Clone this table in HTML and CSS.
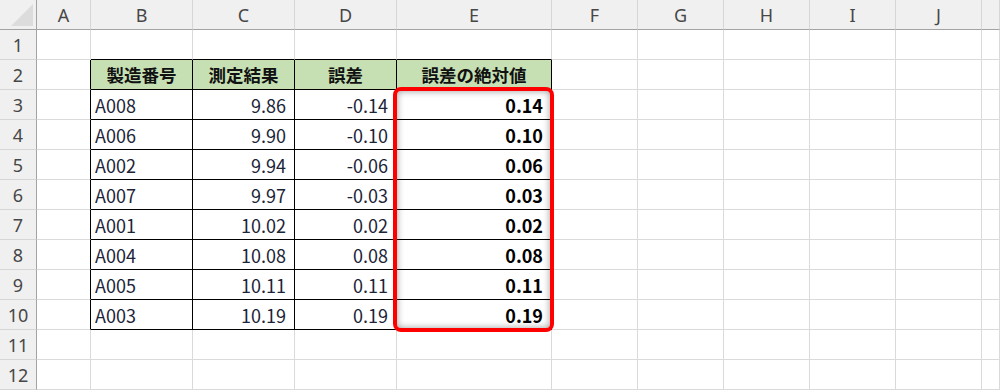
FILE: index.html
```html
<!DOCTYPE html>
<html lang="ja">
<head>
<meta charset="utf-8">
<title>誤差の絶対値</title>
<link rel="stylesheet" href="styles.css">
</head>
<body>
<div class="sheet">
  <!-- column headers -->
  <div class="c corner"></div>
  <div class="c ch">A</div><div class="c ch">B</div><div class="c ch">C</div><div class="c ch">D</div><div class="c ch">E</div><div class="c ch">F</div><div class="c ch">G</div><div class="c ch">H</div><div class="c ch">I</div><div class="c ch">J</div><div class="c ch"></div>

  <!-- row 1 -->
  <div class="c rh">1</div>
  <div class="c"></div><div class="c tt"></div><div class="c tt"></div><div class="c tt"></div><div class="c tt"></div><div class="c"></div><div class="c"></div><div class="c"></div><div class="c"></div><div class="c"></div><div class="c"></div>

  <!-- row 2 -->
  <div class="c rh">2</div>
  <div class="c tl"></div><div class="c tb hd">製造番号</div><div class="c tb hd">測定結果</div><div class="c tb hd">誤差</div><div class="c tb hd">誤差の絶対値</div><div class="c"></div><div class="c"></div><div class="c"></div><div class="c"></div><div class="c"></div><div class="c"></div>

  <!-- row 3 -->
  <div class="c rh">3</div>
  <div class="c tl"></div><div class="c tb txt">A008</div><div class="c tb num">9.86</div><div class="c tb num">-0.14</div><div class="c tb num b">0.14</div><div class="c"></div><div class="c"></div><div class="c"></div><div class="c"></div><div class="c"></div><div class="c"></div>

  <!-- row 4 -->
  <div class="c rh">4</div>
  <div class="c tl"></div><div class="c tb txt">A006</div><div class="c tb num">9.90</div><div class="c tb num">-0.10</div><div class="c tb num b">0.10</div><div class="c"></div><div class="c"></div><div class="c"></div><div class="c"></div><div class="c"></div><div class="c"></div>

  <!-- row 5 -->
  <div class="c rh">5</div>
  <div class="c tl"></div><div class="c tb txt">A002</div><div class="c tb num">9.94</div><div class="c tb num">-0.06</div><div class="c tb num b">0.06</div><div class="c"></div><div class="c"></div><div class="c"></div><div class="c"></div><div class="c"></div><div class="c"></div>

  <!-- row 6 -->
  <div class="c rh">6</div>
  <div class="c tl"></div><div class="c tb txt">A007</div><div class="c tb num">9.97</div><div class="c tb num">-0.03</div><div class="c tb num b">0.03</div><div class="c"></div><div class="c"></div><div class="c"></div><div class="c"></div><div class="c"></div><div class="c"></div>

  <!-- row 7 -->
  <div class="c rh">7</div>
  <div class="c tl"></div><div class="c tb txt">A001</div><div class="c tb num">10.02</div><div class="c tb num">0.02</div><div class="c tb num b">0.02</div><div class="c"></div><div class="c"></div><div class="c"></div><div class="c"></div><div class="c"></div><div class="c"></div>

  <!-- row 8 -->
  <div class="c rh">8</div>
  <div class="c tl"></div><div class="c tb txt">A004</div><div class="c tb num">10.08</div><div class="c tb num">0.08</div><div class="c tb num b">0.08</div><div class="c"></div><div class="c"></div><div class="c"></div><div class="c"></div><div class="c"></div><div class="c"></div>

  <!-- row 9 -->
  <div class="c rh">9</div>
  <div class="c tl"></div><div class="c tb txt">A005</div><div class="c tb num">10.11</div><div class="c tb num">0.11</div><div class="c tb num b">0.11</div><div class="c"></div><div class="c"></div><div class="c"></div><div class="c"></div><div class="c"></div><div class="c"></div>

  <!-- row 10 -->
  <div class="c rh">10</div>
  <div class="c tl"></div><div class="c tb txt">A003</div><div class="c tb num">10.19</div><div class="c tb num">0.19</div><div class="c tb num b">0.19</div><div class="c"></div><div class="c"></div><div class="c"></div><div class="c"></div><div class="c"></div><div class="c"></div>

  <!-- row 11 -->
  <div class="c rh">11</div>
  <div class="c"></div><div class="c"></div><div class="c"></div><div class="c"></div><div class="c"></div><div class="c"></div><div class="c"></div><div class="c"></div><div class="c"></div><div class="c"></div><div class="c"></div>

  <!-- row 12 -->
  <div class="c rh">12</div>
  <div class="c"></div><div class="c"></div><div class="c"></div><div class="c"></div><div class="c"></div><div class="c"></div><div class="c"></div><div class="c"></div><div class="c"></div><div class="c"></div><div class="c"></div>

  <div class="highlight"></div>
</div>
</body>
</html>
```

FILE: styles.css
```css
html, body {
  margin: 0;
  padding: 0;
  background: #ffffff;
}

.sheet {
  position: relative;
  display: grid;
  grid-template-columns: 37px 54px 102px 102px 102px 155px 86px 86px 86px 86px 86px 18px;
  grid-template-rows: repeat(13, 30px);
  width: 1000px;
  height: 390px;
  overflow: hidden;
  font-family: "Noto Sans CJK JP", "Noto Sans", sans-serif;
  font-size: 17.5px;
  color: #1c2438;
}

.c {
  box-sizing: border-box;
  display: flex;
  align-items: center;
  border-right: 1px solid #dadada;
  border-bottom: 1px solid #dadada;
  white-space: nowrap;
  overflow: hidden;
}

.ch {
  justify-content: center;
  background: #f0f0f0;
  border-bottom-color: #a3a3a3;
  border-right-color: #d6d6d6;
  color: #474747;
  font-family: "Noto Sans", "Noto Sans CJK JP", sans-serif;
  font-size: 18px;
  padding-top: 1px;
}

.rh {
  justify-content: center;
  background: #f0f0f0;
  border-right-color: #a3a3a3;
  border-bottom-color: #d6d6d6;
  color: #474747;
  font-family: "Noto Sans", "Noto Sans CJK JP", sans-serif;
  font-size: 18px;
}

.corner {
  position: relative;
  background: #f0f0f0;
  border-right-color: #a3a3a3;
  border-bottom-color: #a3a3a3;
}

.corner::after {
  content: "";
  position: absolute;
  right: 3px;
  bottom: 3px;
  width: 22px;
  height: 22px;
  background: #dcdcdc;
  clip-path: polygon(100% 0, 100% 100%, 0 100%);
}

.tb {
  border-right-color: #000;
  border-bottom-color: #000;
}

.tl {
  border-right-color: #000;
}

.tt {
  border-bottom-color: #000;
}

.hd {
  justify-content: center;
  background: #c6e0b4;
  font-weight: bold;
  color: #111;
}

.txt {
  padding-left: 4px;
  font-size: 18px;
}

.num {
  justify-content: flex-end;
  padding-right: 8px;
  font-size: 18px;
}

.b {
  font-weight: bold;
  color: #000;
}

.highlight {
  position: absolute;
  left: 393px;
  top: 87px;
  width: 161px;
  height: 245px;
  box-sizing: border-box;
  border: 4px solid #ff0000;
  border-radius: 8px;
  box-shadow: inset 0 0 7px rgba(0, 0, 0, 0.4);
  pointer-events: none;
}
```
